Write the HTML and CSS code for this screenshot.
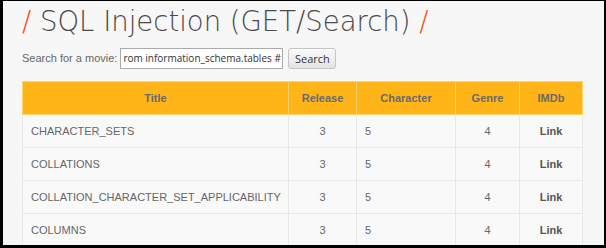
FILE: index.html
```html
<!DOCTYPE html>
<html lang="en">
  <head>
    <meta charset="UTF-8" />
    <title>SQL Injection (GET/Search)</title>
    <link rel="stylesheet" href="styles.css">
  </head>
  <body>
    <div class="frame">
      <div class="main">
        <h1><span class="slash">/</span> SQL Injection (GET/Search) <span class="slash">/</span></h1>

        <form class="search" onsubmit="return false">
          <label for="title">Search for a movie:</label>
          <input type="text" id="title" value="rom information_schema.tables #" />
          <button type="submit">Search</button>
        </form>

        <table class="movies">
          <colgroup>
            <col class="c-title" />
            <col class="c-release" />
            <col class="c-char" />
            <col class="c-genre" />
            <col class="c-imdb" />
          </colgroup>
          <thead>
            <tr>
              <th>Title</th>
              <th>Release</th>
              <th>Character</th>
              <th>Genre</th>
              <th>IMDb</th>
            </tr>
          </thead>
          <tbody>
            <tr>
              <td>CHARACTER_SETS</td>
              <td class="center">3</td>
              <td>5</td>
              <td class="center">4</td>
              <td class="center"><a href="#">Link</a></td>
            </tr>
            <tr>
              <td>COLLATIONS</td>
              <td class="center">3</td>
              <td>5</td>
              <td class="center">4</td>
              <td class="center"><a href="#">Link</a></td>
            </tr>
            <tr>
              <td>COLLATION_CHARACTER_SET_APPLICABILITY</td>
              <td class="center">3</td>
              <td>5</td>
              <td class="center">4</td>
              <td class="center"><a href="#">Link</a></td>
            </tr>
            <tr>
              <td>COLUMNS</td>
              <td class="center">3</td>
              <td>5</td>
              <td class="center">4</td>
              <td class="center"><a href="#">Link</a></td>
            </tr>
          </tbody>
        </table>
      </div>
    </div>
  </body>
</html>
```

FILE: styles.css
```css
body {
  margin: 0;
  padding: 0;
  font-family: "Liberation Sans", Arial, sans-serif;
  background: #000;
}

.frame {
  height: 248px;
  box-sizing: border-box;
  border-style: solid;
  border-color: #000;
  border-width: 1px 2px 3px 3px;
  background: #f7f7f7;
  overflow: hidden;
}

.main {
  padding: 0 19px;
}

h1 {
  margin: 0;
  padding: 4px 0 0 0;
  height: 40px;
  box-sizing: border-box;
  font-family: "DejaVu Sans", sans-serif;
  font-weight: 200;
  font-size: 27.5px;
  color: #4a4a4a;
}

.slash {
  color: #ff4a12;
}

.search {
  display: flex;
  align-items: center;
  height: 28px;
  margin-top: 3px;
  font-size: 11px;
  color: #666;
}

.search label {
  margin-right: 3px;
}

.search input {
  width: 163px;
  height: 21px;
  box-sizing: border-box;
  padding: 0 1px 0 2px;
  border: 1px solid #aaa;
  background: #fff;
  font-family: "Open Sans", sans-serif;
  font-size: 10px;
  color: #333;
}

.search button {
  margin-left: 5px;
  width: 48px;
  height: 21px;
  padding: 0;
  border: 1px solid #c4c4c4;
  border-radius: 3px;
  background: linear-gradient(#fafafa, #e4e4e4);
  font-family: "Open Sans", sans-serif;
  font-size: 11px;
  color: #333;
}

.movies {
  margin-top: 9px;
  width: 560px;
  border-collapse: collapse;
  font-size: 11px;
  color: #666;
  table-layout: fixed;
}

.movies th {
  height: 32px;
  padding: 0;
  background: #ffb518;
  border: 1px solid #ffd36a;
  font-weight: bold;
  color: #6a6a6a;
}

.movies td {
  height: 32px;
  padding: 0 8px;
  background: #f9f9f9;
  border: 1px solid #e8e8e8;
}

.c-title {
  width: 266px;
}

.c-release {
  width: 68px;
}

.c-char {
  width: 99px;
}

.c-genre {
  width: 64px;
}

.c-imdb {
  width: 63px;
}

.center {
  text-align: center;
}

.movies a {
  color: #555;
  font-weight: bold;
  text-decoration: none;
}
```
